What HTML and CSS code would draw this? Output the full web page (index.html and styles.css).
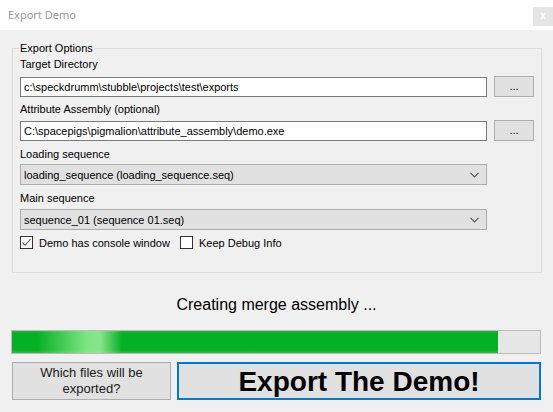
FILE: index.html
```html
<!DOCTYPE html>
<html>
<head>
<meta charset="utf-8">
<title>Export Demo</title>
<link rel="stylesheet" href="styles.css">
</head>
<body>
<div class="window">
  <div class="titlebar">
    <span class="title">Export Demo</span>
    <span class="close">x</span>
  </div>
  <div class="content">
    <fieldset class="group">
      <legend>Export Options</legend>
      <div class="label first">Target Directory</div>
      <div class="row">
        <div class="textbox">c:\speckdrumm\stubble\projects\test\exports</div>
        <div class="browse">...</div>
      </div>
      <div class="label l2">Attribute Assembly (optional)</div>
      <div class="row">
        <div class="textbox">C:\spacepigs\pigmalion\attribute_assembly\demo.exe</div>
        <div class="browse">...</div>
      </div>
      <div class="label l3">Loading sequence</div>
      <div class="combo">
        <span>loading_sequence (loading_sequence.seq)</span>
        <svg class="chev" width="9" height="6" viewBox="0 0 9 6"><path d="M0.5 0.8 L4.5 4.8 L8.5 0.8" fill="none" stroke="#555" stroke-width="1.2"/></svg>
      </div>
      <div class="label l4">Main sequence</div>
      <div class="combo">
        <span>sequence_01 (sequence 01.seq)</span>
        <svg class="chev" width="9" height="6" viewBox="0 0 9 6"><path d="M0.5 0.8 L4.5 4.8 L8.5 0.8" fill="none" stroke="#555" stroke-width="1.2"/></svg>
      </div>
      <div class="checks">
        <div class="check">
          <span class="box"><svg width="11" height="11" viewBox="0 0 11 11"><path d="M1.5 5.5 L4.2 8.3 L9.5 2" fill="none" stroke="#555" stroke-width="1.1"/></svg></span>
          <span>Demo has console window</span>
        </div>
        <div class="check">
          <span class="box"></span>
          <span>Keep Debug Info</span>
        </div>
      </div>
    </fieldset>
    <div class="status">Creating merge assembly ...</div>
    <div class="progress"><div class="fill" style="width:486px"></div></div>
    <div class="buttons">
      <div class="btn which">Which files will be<br>exported?</div>
      <div class="btn export">Export The Demo!</div>
    </div>
  </div>
</div>
</body>
</html>
```
FILE: styles.css
```css
html, body {
  margin: 0;
  padding: 0;
}
body {
  background: #f0f0f0;
  font-family: "Liberation Sans", Arial, sans-serif;
  font-size: 11px;
  color: #000;
  width: 553px;
  height: 412px;
  overflow: hidden;
}
.titlebar {
  height: 30px;
  background: #fff;
  display: flex;
  align-items: flex-start;
  justify-content: space-between;
}
.title {
  font-family: "Noto Sans", "Open Sans", sans-serif;
  font-size: 11px;
  color: #999;
  margin: 7px 0 0 8px;
  line-height: 16px;
}
.close {
  width: 20px;
  height: 19px;
  margin-top: 7px;
  margin-right: 0;
  background: #e5e5e5;
  color: #fff;
  font-family: "Liberation Sans", sans-serif;
  font-weight: bold;
  font-size: 10px;
  line-height: 18px;
  text-align: center;
}
.content {
  padding-top: 11px;
}
.group {
  margin: 0 0 0 12px;
  width: 530px;
  box-sizing: border-box;
  border: 1px solid #dcdcdc;
  padding: 0 7px 23px 7px;
}
.group legend {
  padding: 0 1px;
  margin-left: -1px;
  font-size: 11px;
  line-height: 14px;
}
.label {
  line-height: 13px;
  height: 13px;
  margin-top: 4px;
  margin-bottom: 4px;
}
.label.first {
  margin-top: 3px;
  margin-bottom: 5px;
}
.label.l2 {
  margin-top: 6px;
  margin-bottom: 4px;
}
.label.l3 {
  margin-top: 7px;
  margin-bottom: 3px;
}
.label.l4 {
  margin-top: 7px;
  margin-bottom: 4px;
}
.row {
  display: flex;
  align-items: center;
  gap: 7px;
  height: 21px;
}
.textbox {
  width: 467px;
  height: 20px;
  box-sizing: border-box;
  border: 1px solid #7a7a7a;
  background: #fff;
  padding: 0 3px;
  line-height: 18px;
  white-space: nowrap;
  overflow: hidden;
}
.browse {
  width: 40px;
  height: 21px;
  box-sizing: border-box;
  border: 1px solid #adadad;
  background: #e1e1e1;
  text-align: center;
  line-height: 19px;
}
.combo {
  width: 467px;
  height: 21px;
  box-sizing: border-box;
  border: 1px solid #adadad;
  background: #e1e1e1;
  padding: 0 7px 0 3px;
  display: flex;
  align-items: center;
  justify-content: space-between;
}
.chev {
  display: block;
}
.checks {
  display: flex;
  gap: 0;
  margin-top: 6px;
  height: 13px;
  align-items: center;
}
.check {
  display: flex;
  align-items: center;
  gap: 6px;
}
.check:first-child {
  width: 160px;
}
.box {
  width: 13px;
  height: 13px;
  box-sizing: border-box;
  border: 1px solid #333;
  background: #fff;
  display: flex;
  align-items: center;
  justify-content: center;
}
.status {
  font-size: 16px;
  line-height: 18px;
  text-align: center;
  margin-top: 23px;
}
.progress {
  margin: 16px 0 0 11px;
  width: 530px;
  height: 24px;
  box-sizing: border-box;
  border: 1px solid #bcbcbc;
  background: #e6e6e6;
}
.fill {
  height: 100%;
  background:
    linear-gradient(to right, rgba(140,235,140,0) 25px, rgba(140,235,140,0.9) 75px, rgba(150,235,150,0.9) 88px, rgba(140,235,140,0) 110px),
    linear-gradient(to bottom, #22b83c 0, #06b025 2px, #06b025 19px, #2ebd45 22px);
}
.buttons {
  display: flex;
  gap: 6px;
  margin: 8px 0 0 12px;
}
.btn {
  box-sizing: border-box;
  height: 38px;
  background: #e1e1e1;
  display: flex;
  align-items: center;
  justify-content: center;
  text-align: center;
}
.which {
  width: 159px;
  border: 1px solid #adadad;
  font-size: 13px;
  line-height: 16px;
  color: #1a1a1a;
}
.export {
  width: 364px;
  border: 2px solid #0078d7;
  font-size: 28px;
  font-weight: bold;
  padding-top: 1px;
}
```
